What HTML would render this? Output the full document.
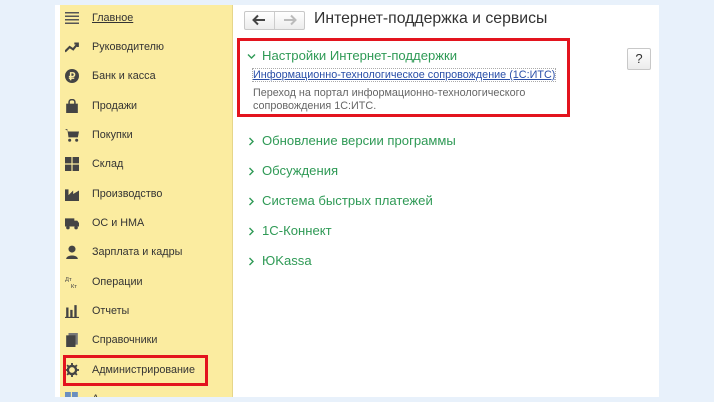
<!DOCTYPE html>
<html><head><meta charset="utf-8"><style>
*{margin:0;padding:0;box-sizing:border-box}
body{width:714px;height:402px;background:#e8f1fb;position:relative;overflow:hidden;font-family:"Liberation Sans",sans-serif}
#panel{position:absolute;left:55px;top:5px;width:604px;height:392px;background:#fff}
#side{position:absolute;left:60px;top:5px;width:173px;height:392px;background:#fbeca0;border-right:1px solid #e6d68a;overflow:hidden}
.it{position:absolute;left:0;height:20px;width:170px;font-size:10.8px;color:#333;line-height:20px}
.it span{position:absolute;left:32px}
.ic{position:absolute;left:5px;top:3px;width:14px;height:14px}
.g{position:absolute;font-size:13.1px;color:#2f9a56}
.ch{position:absolute;left:-15px;top:4px;width:9px;height:9px}
</style></head><body>
<div id="panel"></div>
<div id="side">
<div class="it" style="top:3px"><svg class="ic" viewBox="0 0 12 12"><path d="M0 1.5h12M0 4.5h12M0 7.5h12M0 10.5h12" stroke="#555" stroke-width="1.2"/></svg><span style="text-decoration:underline">Главное</span></div>
<div class="it" style="top:32px"><svg class="ic" viewBox="0 0 12 12"><path d="M0 10l4-4 3 2 4-5M8 3h3v3" stroke="#444" stroke-width="1.8" fill="none"/></svg><span>Руководителю</span></div>
<div class="it" style="top:61px"><svg class="ic" viewBox="0 0 12 12"><circle cx="6" cy="6" r="6" fill="#444"/><text x="3.2" y="9.5" font-size="9" fill="#fbeca0" font-weight="bold">₽</text></svg><span>Банк и касса</span></div>
<div class="it" style="top:91px"><svg class="ic" viewBox="0 0 12 12"><path d="M1 4h10v8H1z" fill="#444"/><path d="M3.5 5V2.5a2.5 2 0 0 1 5 0V5" stroke="#444" fill="none" stroke-width="1.3"/></svg><span>Продажи</span></div>
<div class="it" style="top:120px"><svg class="ic" viewBox="0 0 12 12"><path d="M0 1h2l1 7h8l1-5H3" fill="#444"/><circle cx="4" cy="10.5" r="1.3" fill="#444"/><circle cx="10" cy="10.5" r="1.3" fill="#444"/></svg><span>Покупки</span></div>
<div class="it" style="top:149px"><svg class="ic" viewBox="0 0 12 12"><path d="M0 0h5.5v5.5H0zM6.5 0H12v5.5H6.5zM0 6.5h5.5V12H0zM6.5 6.5H12V12H6.5z" fill="#444"/></svg><span>Склад</span></div>
<div class="it" style="top:179px"><svg class="ic" viewBox="0 0 12 12"><path d="M0 12V2h3v5l4-4v3l5-3v9z" fill="#444"/></svg><span>Производство</span></div>
<div class="it" style="top:208px"><svg class="ic" viewBox="0 0 12 12"><path d="M0 2h8v7H0zM8 4h2.5l1.5 2v3H8z" fill="#444"/><circle cx="2.5" cy="10" r="1.5" fill="#444"/><circle cx="9.5" cy="10" r="1.5" fill="#444"/></svg><span>ОС и НМА</span></div>
<div class="it" style="top:237px"><svg class="ic" viewBox="0 0 12 12"><circle cx="6" cy="3.5" r="3" fill="#444"/><path d="M1 12c0-4 10-4 10 0z" fill="#444"/></svg><span>Зарплата и кадры</span></div>
<div class="it" style="top:267px"><svg class="ic" viewBox="0 0 12 12"><text x="0" y="5" font-size="5" fill="#444">Дт</text><text x="5" y="11" font-size="5" fill="#444">Кт</text></svg><span>Операции</span></div>
<div class="it" style="top:296px"><svg class="ic" viewBox="0 0 12 12"><path d="M1 3h2v8H1zM4.5 5h2v6h-2zM8 1h2v10H8zM0 11h12v1H0z" fill="#444"/></svg><span>Отчеты</span></div>
<div class="it" style="top:325px"><svg class="ic" viewBox="0 0 12 12"><path d="M3 0h8v10H3z" fill="#777"/><path d="M1 2h8v10H1z" fill="#444"/></svg><span>Справочники</span></div>
<div class="it" style="top:355px"><svg class="ic" viewBox="0 0 12 12"><circle cx="6" cy="6" r="3.5" stroke="#444" stroke-width="2" fill="none"/><path d="M6 0v3M6 9v3M0 6h3M9 6h3M1.8 1.8l2 2M8.2 8.2l2 2M1.8 10.2l2-2M8.2 3.8l2-2" stroke="#444" stroke-width="1.6"/></svg><span>Администрирование</span></div>
<div class="it" style="top:384px"><svg class="ic" viewBox="0 0 12 12"><path d="M0 0h5v6H0zM6 0h5v6H6z" fill="#6a8fc0"/></svg><span>А</span></div>
</div>
<div style="position:absolute;left:63px;top:355px;width:145px;height:31px;border:3px solid #e3141e"></div>
<div style="position:absolute;left:244px;top:11px;width:61px;height:19px;border:1px solid #c8c8c8;border-radius:2px;background:linear-gradient(#fff,#ececec)"></div>
<div style="position:absolute;left:274px;top:12px;width:1px;height:17px;background:#ccc"></div>
<svg style="position:absolute;left:252px;top:14px" width="14" height="12" viewBox="0 0 14 12"><path d="M13 6H2M6 1.5L1.5 6 6 10.5" stroke="#444" stroke-width="2" fill="none"/></svg>
<svg style="position:absolute;left:283px;top:14px" width="14" height="12" viewBox="0 0 14 12"><path d="M1 6h11M8 1.5L12.5 6 8 10.5" stroke="#bbb" stroke-width="2" fill="none"/></svg>
<div style="position:absolute;left:314px;top:10px;font-size:15.8px;color:#333">Интернет-поддержка и сервисы</div>
<div style="position:absolute;left:237px;top:38px;width:333px;height:79px;border:3px solid #e3141e"></div>
<div class="g" style="left:262px;top:48px"><svg class="ch" viewBox="0 0 9 9"><path d="M1 2.5l3.5 3.5 3.5-3.5" stroke="#2f9a56" stroke-width="1.4" fill="none"/></svg>Настройки Интернет-поддержки</div>
<div style="position:absolute;left:253px;top:69px;font-size:10.8px;color:#2a4fa8;text-decoration:underline;outline:1px dotted #aaa">Информационно-технологическое сопровождение (1С:ИТС)</div>
<div style="position:absolute;left:253px;top:87px;font-size:10.8px;color:#666;line-height:13px;width:300px">Переход на портал информационно-технологического<br>сопровождения 1С:ИТС.</div>
<div style="position:absolute;left:627px;top:48px;width:24px;height:22px;border:1px solid #c8c8c8;border-radius:2px;background:linear-gradient(#fff,#ececec);font-size:13px;text-align:center;line-height:20px;color:#333">?</div>
<div class="g" style="left:262px;top:133px"><svg class="ch" viewBox="0 0 9 9"><path d="M2.5 1l3.5 3.5-3.5 3.5" stroke="#2f9a56" stroke-width="1.4" fill="none"/></svg>Обновление версии программы</div>
<div class="g" style="left:262px;top:163px"><svg class="ch" viewBox="0 0 9 9"><path d="M2.5 1l3.5 3.5-3.5 3.5" stroke="#2f9a56" stroke-width="1.4" fill="none"/></svg>Обсуждения</div>
<div class="g" style="left:262px;top:193px"><svg class="ch" viewBox="0 0 9 9"><path d="M2.5 1l3.5 3.5-3.5 3.5" stroke="#2f9a56" stroke-width="1.4" fill="none"/></svg>Система быстрых платежей</div>
<div class="g" style="left:262px;top:223px"><svg class="ch" viewBox="0 0 9 9"><path d="M2.5 1l3.5 3.5-3.5 3.5" stroke="#2f9a56" stroke-width="1.4" fill="none"/></svg>1С-Коннект</div>
<div class="g" style="left:262px;top:253px"><svg class="ch" viewBox="0 0 9 9"><path d="M2.5 1l3.5 3.5-3.5 3.5" stroke="#2f9a56" stroke-width="1.4" fill="none"/></svg>ЮKassa</div>
</body></html>
